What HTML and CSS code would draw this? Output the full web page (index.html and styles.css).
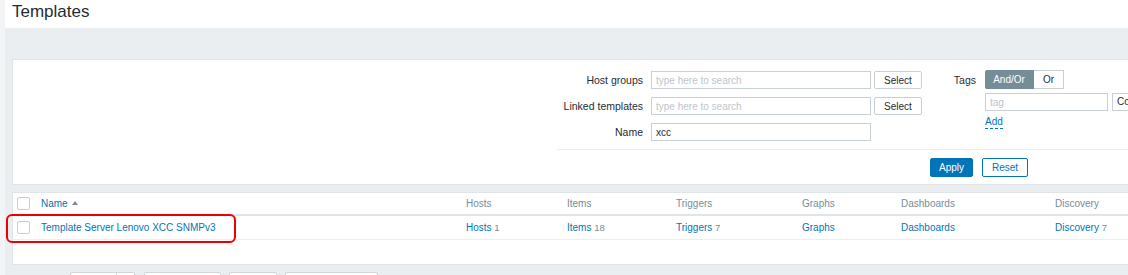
FILE: index.html
```html
<!DOCTYPE html>
<html>
<head>
<meta charset="utf-8">
<title>Templates</title>
<link rel="stylesheet" href="styles.css">
</head>
<body>
<div class="page">
	<div class="side"></div>
	<div class="main">
		<div class="header">
			<h1>Templates</h1>
		</div>
		<div class="content">
			<div class="filter">
				<div class="filter-body">
					<div class="filter-form">
						<label>Host groups</label>
						<input type="text" placeholder="type here to search">
						<button class="btn-grey">Select</button>

						<label>Linked templates</label>
						<input type="text" placeholder="type here to search">
						<button class="btn-grey">Select</button>

						<label>Name</label>
						<input type="text" value="xcc">
						<span></span>
					</div>
					<div class="tags-form">
						<label>Tags</label>
						<div class="radio">
							<span class="radio-on">And/Or</span>
							<span>Or</span>
						</div>
						<span></span>
						<div class="tag-row">
							<input type="text" class="tag-input" placeholder="tag">
							<div class="tag-op">Co</div>
						</div>
						<span></span>
						<a class="add-link" href="#">Add</a>
					</div>
				</div>
				<div class="filter-footer">
					<button class="btn-apply">Apply</button>
					<button class="btn-reset">Reset</button>
				</div>
			</div>

			<div class="list">
				<table>
					<colgroup>
						<col style="width:28px">
						<col style="width:425px">
						<col style="width:101px">
						<col style="width:109px">
						<col style="width:126px">
						<col style="width:99px">
						<col style="width:154px">
						<col>
					</colgroup>
					<thead>
						<tr>
							<th><span class="checkbox"></span></th>
							<th><a href="#">Name</a><span class="arrow-up"></span></th>
							<th>Hosts</th>
							<th>Items</th>
							<th>Triggers</th>
							<th>Graphs</th>
							<th>Dashboards</th>
							<th>Discovery</th>
						</tr>
					</thead>
					<tbody>
						<tr>
							<td><span class="checkbox"></span></td>
							<td><a href="#">Template Server Lenovo XCC SNMPv3</a></td>
							<td><a href="#">Hosts</a> <sup>1</sup></td>
							<td><a href="#">Items</a> <sup>18</sup></td>
							<td><a href="#">Triggers</a> <sup>7</sup></td>
							<td><a href="#">Graphs</a></td>
							<td><a href="#">Dashboards</a></td>
							<td><a href="#">Discovery</a> <sup>7</sup></td>
						</tr>
					</tbody>
				</table>
				<div class="highlight"></div>
			</div>

			<div class="actions">
				<div class="split-btn"><span class="split-main"></span><span class="split-arrow"></span></div>
				<div class="act-btn w77"></div>
				<div class="act-btn w48"></div>
				<div class="act-btn w93"></div>
			</div>
		</div>
	</div>
</div>
</body>
</html>
```

FILE: styles.css
```css
* {
	box-sizing: border-box;
}

html, body {
	margin: 0;
	padding: 0;
	height: 275px;
	overflow: hidden;
}

body {
	font: 10px "Liberation Sans", Arial, sans-serif;
	color: #1f2c33;
	background-color: #fff;
}

a {
	color: #0275b8;
	text-decoration: none;
}

.page {
	display: flex;
	height: 275px;
}

.side {
	width: 5px;
	flex: none;
	background-color: #f3f4f5;
}

.main {
	flex: 1;
	min-width: 0;
	display: flex;
	flex-direction: column;
}

.header {
	height: 28px;
	padding-left: 7px;
	background-color: #fff;
}

.header h1 {
	margin: 0;
	font: 17px "Liberation Sans", Arial, sans-serif;
	line-height: 24px;
	color: #1f2c33;
}

.content {
	flex: 1;
	background-color: #ebeef0;
	padding: 31px 0 0 7px;
	overflow: hidden;
}

/* filter */
.filter {
	background-color: #fff;
	border: 1px solid #dfe4e7;
	margin-right: -30px;
}

.filter-body {
	display: flex;
	padding: 11px 0 8px 544px;
}

.filter-form {
	display: grid;
	grid-template-columns: 94px 223px 48px;
	grid-auto-rows: 18px;
	row-gap: 8px;
	align-items: center;
}

.filter-form label,
.tags-form label {
	text-align: right;
	padding-right: 8px;
	white-space: nowrap;
	font-size: 10.5px;
}

input[type=text] {
	height: 18px;
	width: 220px;
	border: 1px solid #c8d0d5;
	padding: 0 4px;
	font: 10px "Liberation Sans", Arial, sans-serif;
	color: #1f2c33;
	outline: none;
	background-color: #fff;
}

input::placeholder {
	color: #bcc5ca;
}

button {
	font: 10px "Liberation Sans", Arial, sans-serif;
	height: 18px;
	padding: 0;
	border-radius: 2px;
	cursor: pointer;
}

.btn-grey {
	width: 48px;
	background-color: #fff;
	border: 1px solid #c8d0d5;
	color: #1f2c33;
}

.tags-form {
	display: grid;
	grid-template-columns: 63px auto;
	align-items: center;
	align-content: start;
	margin-top: -1px;
}

.tags-form label {
	padding-right: 9px;
}

.radio {
	display: flex;
	height: 19px;
}

.radio span {
	display: flex;
	align-items: center;
	justify-content: center;
	border: 1px solid #c8d0d5;
	border-left: none;
	width: 30px;
	color: #1f2c33;
}

.radio .radio-on {
	width: 49px;
	background-color: #768d99;
	border-color: #768d99;
	color: #fff;
	border-radius: 2px 0 0 2px;
}

.tag-row {
	display: flex;
	margin-top: 4px;
}

.tag-input {
	width: 123px !important;
}

.tag-op {
	margin-left: 4px;
	height: 18px;
	width: 60px;
	border: 1px solid #c8d0d5;
	padding: 2px 0 0 4px;
	background-color: #fff;
}

.add-link {
	margin-top: 4px;
	justify-self: start;
	line-height: 13px;
	border-bottom: 1px dashed #0275b8;
}

.filter-footer {
	margin-left: 544px;
	border-top: 1px solid #ebeef0;
	padding: 8px 0 7px 373px;
	display: flex;
	gap: 9px;
}

.btn-apply {
	width: 43px;
	background-color: #0275b8;
	border: 1px solid #0275b8;
	color: #fff;
	height: 19px;
}

.btn-reset {
	width: 46px;
	background-color: #fff;
	border: 1px solid #0275b8;
	color: #0275b8;
	height: 19px;
}

/* list */
.list {
	position: relative;
	margin-top: 7px;
	margin-right: -30px;
	background-color: #fff;
	border: 1px solid #dfe4e7;
	padding-bottom: 24px;
}

table {
	width: 100%;
	border-collapse: collapse;
	table-layout: fixed;
}

th, td {
	padding: 0;
	text-align: left;
	white-space: nowrap;
	vertical-align: middle;
}

th {
	height: 22px;
	font-weight: normal;
	color: #768d99;
	border-bottom: 2px solid #dfe4e7;
}

td {
	height: 24px;
	border-bottom: 1px solid #ebeef0;
}

th:first-child,
td:first-child {
	padding-left: 4px;
}

.checkbox {
	display: block;
	width: 13px;
	height: 13px;
	border: 1px solid #c5ced3;
	border-radius: 2px;
	background-color: #fff;
}

.arrow-up {
	display: inline-block;
	margin-left: 4px;
	vertical-align: 2px;
	border-left: 3px solid transparent;
	border-right: 3px solid transparent;
	border-bottom: 4px solid #768d99;
}

sup {
	vertical-align: baseline;
	font-size: 9.5px;
	color: #768d99;
}

.highlight {
	position: absolute;
	left: -7px;
	top: 21px;
	width: 230px;
	height: 29px;
	border: 2px solid #ee0000;
	border-radius: 6px;
	pointer-events: none;
}

/* bottom buttons */
.actions {
	display: flex;
	gap: 8px;
	margin-top: 7px;
	padding-left: 58px;
}

.split-btn {
	display: flex;
	height: 22px;
}

.split-main,
.split-arrow,
.act-btn {
	height: 22px;
	background-color: #fff;
	border: 1px solid #cfd6db;
	border-radius: 2px;
}

.split-main {
	width: 47px;
	border-radius: 2px 0 0 2px;
}

.split-arrow {
	width: 18px;
	border-left: none;
	border-radius: 0 2px 2px 0;
}

.w77 { width: 77px; margin-left: 1px; }
.w48 { width: 48px; }
.w93 { width: 93px; }
```
